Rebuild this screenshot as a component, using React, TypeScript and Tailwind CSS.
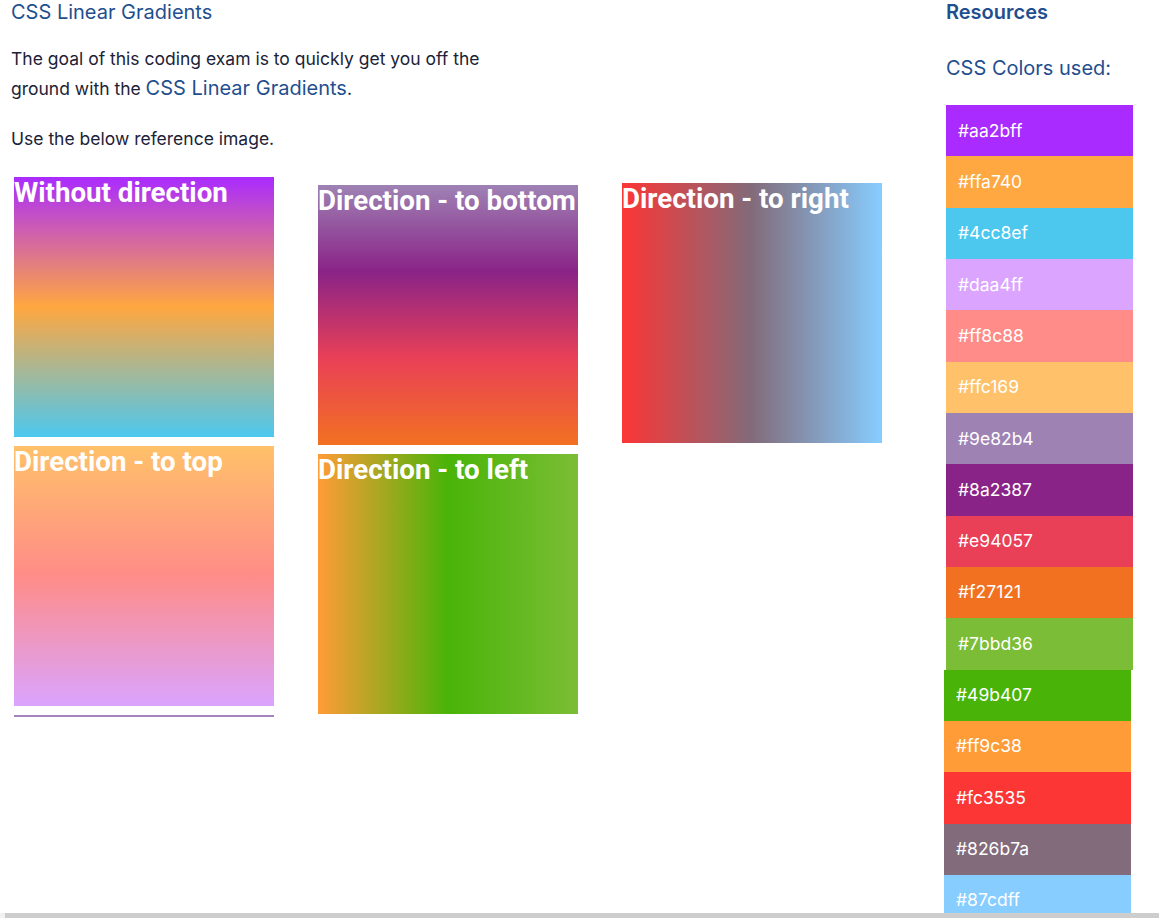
const colors = [
  { hex: "#aa2bff" },
  { hex: "#ffa740" },
  { hex: "#4cc8ef" },
  { hex: "#daa4ff" },
  { hex: "#ff8c88" },
  { hex: "#ffc169" },
  { hex: "#9e82b4" },
  { hex: "#8a2387" },
  { hex: "#e94057" },
  { hex: "#f27121" },
  { hex: "#7bbd36" },
  { hex: "#49b407", shift: true },
  { hex: "#ff9c38", shift: true },
  { hex: "#fc3535", shift: true },
  { hex: "#826b7a", shift: true },
  { hex: "#87cdff", shift: true },
];

const GradientBox = ({ label, className }: { label: string; className: string }) => {
  return (
    <div className={`w-[260px] h-[260px] ${className}`}>
      <h1 className="font-['Roboto',sans-serif] font-bold text-[27.7px] leading-[32px] text-white whitespace-nowrap">
        {label}
      </h1>
    </div>
  );
};

const App = () => {
  return (
    <div className="h-[918px] w-[1159px] flex flex-col bg-white font-['Inter','Noto_Sans',sans-serif] overflow-hidden">
      <div className="flex flex-1 overflow-hidden">
        {/* main content */}
        <div className="flex-1 pl-[11px]">
          <h2 className="text-[20px] leading-[24px] text-[#1f4f8f]">CSS Linear Gradients</h2>
          <p className="mt-[20px] w-[500px] text-[17.5px] leading-[30px] text-[#1c2238]">
            The goal of this coding exam is to quickly get you off the ground with the{" "}
            <span className="text-[20px] leading-[24px] text-[#1f4f8f]">CSS Linear Gradients</span>.
          </p>
          <p className="mt-[20px] text-[17.5px] leading-[30px] text-[#1c2238]">Use the below reference image.</p>

          <div className="flex gap-[44px] pl-[3px]">
            <div className="flex flex-col">
              <div className="mt-[23px]">
                <GradientBox
                  label="Without direction"
                  className="bg-[linear-gradient(#aa2bff,#ffa740,#4cc8ef)]"
                />
              </div>
              <div className="mt-[9px]">
                <GradientBox
                  label="Direction - to top"
                  className="bg-[linear-gradient(to_top,#daa4ff,#ff8c88,#ffc169)]"
                />
              </div>
              <div className="mt-[9px] w-[260px] h-[2px] bg-[#a583c0]" />
            </div>
            <div className="flex flex-col">
              <div className="mt-[31px]">
                <GradientBox
                  label="Direction - to bottom"
                  className="bg-[linear-gradient(to_bottom,#9e82b4,#8a2387,#e94057,#f27121)]"
                />
              </div>
              <div className="mt-[9px]">
                <GradientBox
                  label="Direction - to left"
                  className="bg-[linear-gradient(to_left,#7bbd36,#49b407,#ff9c38)]"
                />
              </div>
            </div>
            <div className="flex flex-col">
              <div className="mt-[29px]">
                <GradientBox
                  label="Direction - to right"
                  className="bg-[linear-gradient(to_right,#fc3535,#826b7a,#87cdff)]"
                />
              </div>
            </div>
          </div>
        </div>

        {/* resources sidebar */}
        <div className="w-[213px] shrink-0">
          <h2 className="text-[20px] leading-[24px] font-semibold text-[#1f4f8f]">Resources</h2>
          <p className="mt-[32px] text-[20px] leading-[24px] text-[#1f4f8f]">CSS Colors used:</p>
          <div className="mt-[25px] flex flex-col">
            {colors.map((item) => (
              <div
                key={item.hex}
                className={`w-[187px] h-[51.33px] shrink-0 flex items-center pl-3 text-[17.5px] text-white ${
                  item.shift ? "-ml-[2px]" : ""
                }`}
                style={{ backgroundColor: item.hex }}
              >
                {item.hex}
              </div>
            ))}
          </div>
        </div>
      </div>

      {/* horizontal scrollbar */}
      <div className="flex h-[5px] shrink-0 bg-[#f1f1f1]">
        <div className="ml-[5px] flex-1 bg-[#cdcdcd]" />
      </div>
    </div>
  );
};

export default App;
